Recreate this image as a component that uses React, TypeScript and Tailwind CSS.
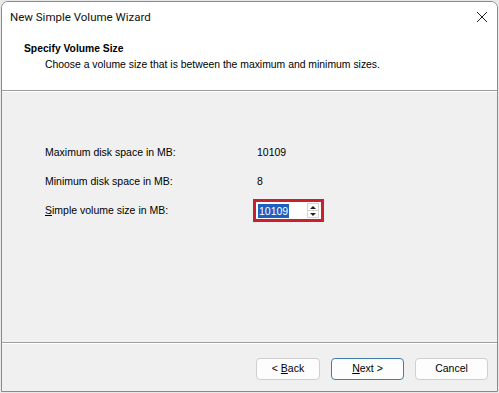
export default function App() {
  const font = { fontFamily: '"Liberation Sans", Arial, sans-serif' }
  return (
    <div className="w-[499px] h-[393px] bg-[#e9e9e9] overflow-hidden" style={font}>
      <div className="ml-[1px] mt-[1px] w-[497px] h-[391px] flex flex-col bg-[#f0f0f0] border border-[#8a8a8a] rounded-t-[7px] overflow-hidden">
        <div className="h-[29px] bg-white flex items-center justify-between pl-[8px] pr-[9px] flex-shrink-0">
          <span className="text-[11.5px] text-[#111] pt-[2px]" style={{ fontFamily: 'Roboto, "Liberation Sans", sans-serif' }}>
            New Simple Volume Wizard
          </span>
          <svg width="12" height="12" viewBox="0 0 12 12">
            <path d="M1 1L11 11M11 1L1 11" stroke="#222" strokeWidth="1" />
          </svg>
        </div>
        <div className="h-[59px] bg-white pl-[22px] pt-[10px] flex-shrink-0">
          <div className="text-[10.3px] font-bold text-black leading-[15px]">Specify Volume Size</div>
          <div className="text-[10.4px] text-black leading-[15px] pl-[21px] pt-[1px]">
            Choose a volume size that is between the maximum and minimum sizes.
          </div>
        </div>
        <div className="h-[1px] bg-[#a0a0a0] flex-shrink-0" />
        <div className="h-[1px] bg-white flex-shrink-0" />
        <div className="flex-1 flex flex-col pl-[43px] pt-[46px] text-[10.5px] text-black">
          <div className="flex items-center h-[29px]">
            <span className="w-[212px]">Maximum disk space in MB:</span>
            <span>10109</span>
          </div>
          <div className="flex items-center h-[29px]">
            <span className="w-[212px]">Minimum disk space in MB:</span>
            <span>8</span>
          </div>
          <div className="flex items-center h-[29px]">
            <span className="w-[208px]">
              <span className="underline">S</span>imple volume size in MB:
            </span>
            <div className="w-[71px] h-[23px] border-[3px] border-[#c8202f] bg-white flex items-center">
              <div className="flex-1 flex items-center pl-[2px]">
                <span className="bg-[#1f5fbf] text-white px-[1px] leading-[14px]">10109</span>
              </div>
              <div className="w-[12px] h-[15px] flex flex-col mr-[2px] border border-[#d4d4d4]">
                <div className="flex-1 flex items-center justify-center border-b border-[#d4d4d4]">
                  <svg width="6" height="3" viewBox="0 0 6 3">
                    <path d="M0 3L3 0L6 3Z" fill="#222" />
                  </svg>
                </div>
                <div className="flex-1 flex items-center justify-center">
                  <svg width="6" height="3" viewBox="0 0 6 3">
                    <path d="M0 0L3 3L6 0Z" fill="#222" />
                  </svg>
                </div>
              </div>
            </div>
          </div>
        </div>
        <div className="h-[1px] bg-[#a0a0a0] flex-shrink-0" />
        <div className="h-[1px] bg-white flex-shrink-0" />
        <div className="h-[47px] flex items-start justify-end pt-[14px] pr-[9px] gap-[11px] flex-shrink-0 text-[10.5px] text-black">
          <div className="flex gap-[11px]">
            <button className="w-[64px] h-[22px] bg-[#fdfdfd] border border-[#cfcfcf] rounded-[4px]">
              &lt; <span className="underline">B</span>ack
            </button>
            <button className="w-[73px] h-[22px] bg-[#fdfdfd] border border-[#3d7fa8] rounded-[4px]">
              <span className="underline">N</span>ext &gt;
            </button>
          </div>
          <button className="w-[73px] h-[22px] bg-[#fdfdfd] border border-[#cfcfcf] rounded-[4px]">Cancel</button>
        </div>
      </div>
    </div>
  )
}
